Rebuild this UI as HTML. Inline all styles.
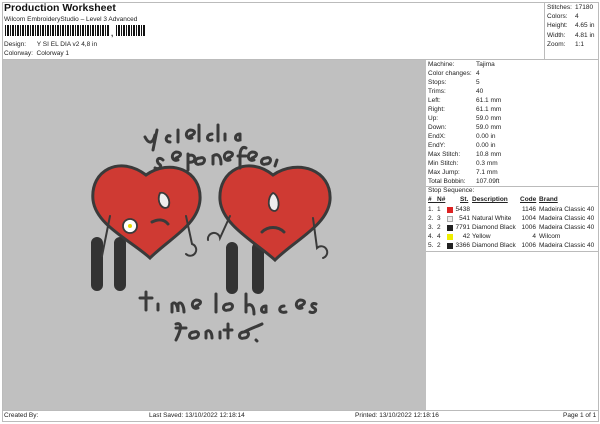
<!DOCTYPE html>
<html><head><meta charset="utf-8"><style>
*{margin:0;padding:0;box-sizing:border-box}
body{width:600px;height:424px;background:#fff;font-family:"Liberation Sans",sans-serif;font-size:6.5px;color:#222;position:relative;overflow:hidden}
.a{position:absolute;white-space:nowrap}
.ln{position:absolute;background:#bbb}
.bc{position:absolute;height:11px;background:repeating-linear-gradient(90deg,#111 0 1px,#fff 1px 2px,#111 2px 4px,#fff 4px 5px)}
</style></head><body>
<div class="ln" style="left:2px;top:2px;width:597px;height:1px"></div>
<div class="ln" style="left:2px;top:2px;width:1px;height:420px"></div>
<div class="ln" style="left:598px;top:2px;width:1px;height:420px"></div>
<div class="ln" style="left:544px;top:2px;width:1px;height:57px"></div>
<div class="ln" style="left:2px;top:59px;width:597px;height:1px"></div>
<div class="ln" style="left:2px;top:410px;width:597px;height:1px"></div>
<div class="ln" style="left:2px;top:421px;width:597px;height:1px"></div>
<div class="a" style="left:4px;top:2px;font-size:10.5px;font-weight:bold;color:#111">Production Worksheet</div>
<div class="a" style="left:4px;top:16px">Wilcom EmbroideryStudio – Level 3 Advanced</div>
<div class="bc" style="left:5px;top:25px;width:105px"></div>
<div class="a" style="left:111px;top:29px;font-size:8px;font-weight:bold">,</div>
<div class="bc" style="left:116px;top:25px;width:29px"></div>
<div class="a" style="left:4px;top:41px">Design:&nbsp;&nbsp;&nbsp;&nbsp;&nbsp; Y SI EL DIA v2 4,8 in</div>
<div class="a" style="left:4px;top:50px">Colorway:&nbsp; Colorway 1</div>
<div class="a" style="left:547px;top:3px;line-height:9.2px">Stitches:<br>Colors:<br>Height:<br>Width:<br>Zoom:</div>
<div class="a" style="left:575px;top:3px;line-height:9.2px">17180<br>4<br>4.65 in<br>4.81 in<br>1:1</div>
<div class="a" style="left:3px;top:60px;width:423px;height:350px;background:#c0c0c0"></div>
<svg class="a" style="left:3px;top:60px" width="423" height="350" viewBox="3 60 423 350">
<g stroke="#3a3a3a" stroke-width="3" fill="none" stroke-linecap="round">
<path d="M97 243 v42 M120 243 v42 M232 248 v40 M258 248 v40" stroke="#333" stroke-width="12"/>
<path d="M146 175 C120 155 90 170 93 200 C96 225 130 240 150 258 C170 238 198 225 200 200 C202 170 170 158 146 175Z" fill="#cf3a33"/>
<path d="M273 175 C248 155 218 170 220 200 C222 225 255 242 275 260 C295 240 328 225 330 200 C332 170 298 158 273 175Z" fill="#cf3a33"/>
<path d="M160 193 c-4 8 2 18 8 14 c4-6-2-16-8-14z" fill="#eee" stroke-width="1.8"/>
<path d="M273 193 c-6 4-6 18 2 18 c6-2 4-16-2-18z" fill="#eee" stroke-width="1.8"/>
<path d="M152 222 c6-3 12-3 16 2 M262 232 c6-6 16-6 22 0"/>
<path d="M110 216 l-8 40 M186 216 l6 28 a6 6 0 1 1-6 10 M230 216 l-10 22 a6 6 0 1 0-12 2 M313 218 l4 30 a6 6 0 1 1 6 10" stroke-width="2"/>
<circle cx="130" cy="226" r="7" fill="#fff" stroke-width="1.8"/>
<circle cx="130" cy="226" r="2" fill="#e8d800" stroke="none"/>
<path d="M145 137 c4 8 8 6 10-2 M157 130 l-4 20 M170 136 c-4-2-6 6 0 6 M178 130 v12 M190 136 c6-2 6-6 0-6 c-6 2-4 10 2 8 M199 125 v16 M212 134 c-6 0-6 8 0 6 M218 125 v16 M225 134 v6 M240 134 c-6 0-6 8 0 6 v-6"/>
<path d="M163 160 c-4-4-8 0-4 4 c4 2 0 6-4 4 M176 158 c6-2 6-6 0-6 c-6 2-4 10 2 8 M188 154 v16 M188 156 c8-4 10 8 0 6 M200 158 c-6 0-6 8 0 6 c6 0 6-8 0-6 M213 164 v-8 c6-4 8 2 8 8 M228 158 c6-2 6-6 0-6 c-6 2-4 10 2 8 M246 148 c-4-2-6 2-6 8 v12 M238 156 h8 M252 158 c6-2 6-6 0-6 c-6 2-4 10 2 8 M266 158 c-6 0-6 8 0 6 c6 0 6-8 0-6 M277 160 l-2 6"/>
<path d="M140 298 h12 M146 292 v18 M158 304 v6 M172 312 v-8 c4-4 6 4 6 8 v-8 c4-4 6 4 6 8 M196 306 c6-2 6-6 0-6 c-6 2-4 10 2 8 M216 294 v18 M228 304 c-6 0-6 8 0 6 c6 0 6-8 0-6 M246 294 v18 M246 306 c6-4 8 2 8 8 M266 306 c-6 0-6 8 0 6 v-6 M284 306 c-6 0-6 8 2 6 M300 306 c6-2 6-6 0-6 c-6 2-4 10 2 8 M316 304 c-4-2-6 2-2 4 c4 2 0 6-4 4"/>
<path d="M176 324 c6-2 6 4 0 16 M176 328 h10 M194 332 c-6 0-6 8 0 6 c6 0 6-8 0-6 M206 338 v-6 c4-4 6 2 6 6 M220 332 v6 M228 324 v14 M224 330 h8 M244 332 c-6 0-6 8 0 6 c6 0 6-8 0-6 c8-4 14-6 18-8 M256 340 l1 1"/>
</g></svg>
<div class="a" style="left:428px;top:60px;line-height:9px">Machine:<br>Color changes:<br>Stops:<br>Trims:<br>Left:<br>Right:<br>Up:<br>Down:<br>EndX:<br>EndY:<br>Max Stitch:<br>Min Stitch:<br>Max Jump:<br>Total Bobbin:</div>
<div class="a" style="left:476px;top:60px;line-height:9px">Tajima<br>4<br>5<br>40<br>61.1 mm<br>61.1 mm<br>59.0 mm<br>59.0 mm<br>0.00 in<br>0.00 in<br>10.8 mm<br>0.3 mm<br>7.1 mm<br>107.09ft</div>
<div class="ln" style="left:426px;top:186px;width:172px;height:1px"></div>
<div class="a" style="left:428px;top:187px">Stop Sequence:</div>
<div class="a" style="left:428px;top:196px;font-weight:bold;text-decoration:underline">#&nbsp;&nbsp; N#</div>
<div class="a" style="left:460px;top:196px;font-weight:bold;text-decoration:underline">St.</div>
<div class="a" style="left:472px;top:196px;font-weight:bold;text-decoration:underline">Description</div>
<div class="a" style="left:520px;top:196px;font-weight:bold;text-decoration:underline">Code</div>
<div class="a" style="left:539px;top:196px;font-weight:bold;text-decoration:underline">Brand</div>
<div class="a" style="left:428px;top:205px;line-height:9px">1.&nbsp; 1<br>2.&nbsp; 3<br>3.&nbsp; 2<br>4.&nbsp; 4<br>5.&nbsp; 2</div>
<div class="a" style="left:447px;top:207px;width:6px;height:6px;background:#d22"></div>
<div class="a" style="left:447px;top:216px;width:6px;height:6px;background:#eee;border:1px solid #aaa"></div>
<div class="a" style="left:447px;top:225px;width:6px;height:6px;background:#222"></div>
<div class="a" style="left:447px;top:234px;width:6px;height:6px;background:#ee0"></div>
<div class="a" style="left:447px;top:243px;width:6px;height:6px;background:#222"></div>
<div class="a" style="left:452px;top:205px;line-height:9px;width:18px;text-align:right">5438<br>541<br>7791<br>42<br>3366</div>
<div class="a" style="left:472px;top:205px;line-height:9px"><br>Natural White<br>Diamond Black<br>Yellow<br>Diamond Black</div>
<div class="a" style="left:514px;top:205px;line-height:9px;width:22px;text-align:right">1146<br>1004<br>1006<br>4<br>1006</div>
<div class="a" style="left:539px;top:205px;line-height:9px">Madeira Classic 40<br>Madeira Classic 40<br>Madeira Classic 40<br>Wilcom<br>Madeira Classic 40</div>
<div class="ln" style="left:426px;top:251px;width:172px;height:1px"></div>
<div class="a" style="left:4px;top:412px">Created By:</div>
<div class="a" style="left:149px;top:412px">Last Saved: 13/10/2022 12:18:14</div>
<div class="a" style="left:355px;top:412px">Printed: 13/10/2022 12:18:16</div>
<div class="a" style="left:563px;top:412px">Page 1 of 1</div>
</body></html>
